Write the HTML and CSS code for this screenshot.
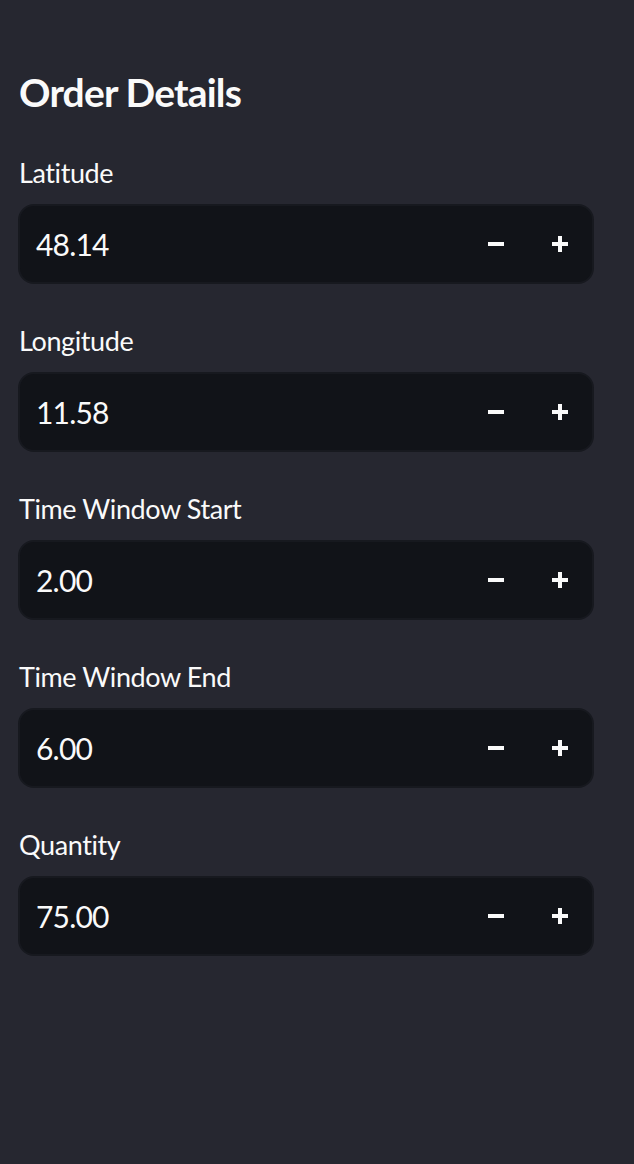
FILE: index.html
```html
<!DOCTYPE html>
<html>
<head>
<meta charset="utf-8">
<link rel="stylesheet" href="styles.css">
</head>
<body>
<div class="sidebar">
  <h2 class="title">Order Details</h2>
  <div class="field">
    <label class="label">Latitude</label>
    <div class="input">
      <span class="value">48.14</span>
      <div class="steps">
        <button class="step"><svg width="16" height="16" viewBox="0 0 16 16"><rect x="0" y="6" width="16" height="4" fill="#fafafa"/></svg></button>
        <button class="step"><svg width="16" height="16" viewBox="0 0 16 16"><rect x="0" y="6" width="16" height="4" fill="#fafafa"/><rect x="6" y="0" width="4" height="16" fill="#fafafa"/></svg></button>
      </div>
    </div>
  </div>
  <div class="field">
    <label class="label">Longitude</label>
    <div class="input">
      <span class="value">11.58</span>
      <div class="steps">
        <button class="step"><svg width="16" height="16" viewBox="0 0 16 16"><rect x="0" y="6" width="16" height="4" fill="#fafafa"/></svg></button>
        <button class="step"><svg width="16" height="16" viewBox="0 0 16 16"><rect x="0" y="6" width="16" height="4" fill="#fafafa"/><rect x="6" y="0" width="4" height="16" fill="#fafafa"/></svg></button>
      </div>
    </div>
  </div>
  <div class="field">
    <label class="label">Time Window Start</label>
    <div class="input">
      <span class="value">2.00</span>
      <div class="steps">
        <button class="step"><svg width="16" height="16" viewBox="0 0 16 16"><rect x="0" y="6" width="16" height="4" fill="#fafafa"/></svg></button>
        <button class="step"><svg width="16" height="16" viewBox="0 0 16 16"><rect x="0" y="6" width="16" height="4" fill="#fafafa"/><rect x="6" y="0" width="4" height="16" fill="#fafafa"/></svg></button>
      </div>
    </div>
  </div>
  <div class="field">
    <label class="label">Time Window End</label>
    <div class="input">
      <span class="value">6.00</span>
      <div class="steps">
        <button class="step"><svg width="16" height="16" viewBox="0 0 16 16"><rect x="0" y="6" width="16" height="4" fill="#fafafa"/></svg></button>
        <button class="step"><svg width="16" height="16" viewBox="0 0 16 16"><rect x="0" y="6" width="16" height="4" fill="#fafafa"/><rect x="6" y="0" width="4" height="16" fill="#fafafa"/></svg></button>
      </div>
    </div>
  </div>
  <div class="field">
    <label class="label">Quantity</label>
    <div class="input">
      <span class="value">75.00</span>
      <div class="steps">
        <button class="step"><svg width="16" height="16" viewBox="0 0 16 16"><rect x="0" y="6" width="16" height="4" fill="#fafafa"/></svg></button>
        <button class="step"><svg width="16" height="16" viewBox="0 0 16 16"><rect x="0" y="6" width="16" height="4" fill="#fafafa"/><rect x="6" y="0" width="4" height="16" fill="#fafafa"/></svg></button>
      </div>
    </div>
  </div>
</div>
</body>
</html>
```

FILE: styles.css
```css
html, body {
  margin: 0;
  padding: 0;
  background: #262730;
  height: 100%;
}
body {
  font-family: "Lato", "Noto Sans", sans-serif;
  color: #fafafa;
  font-variant-ligatures: none;
}
.sidebar {
  display: flex;
  flex-direction: column;
  gap: 39px;
  padding: 68px 40px 0 18px;
}
.title {
  margin: 0;
  font-size: 39px;
  font-weight: 700;
  line-height: 48px;
  letter-spacing: -0.8px;
  padding-left: 1px;
}
.field {
  display: flex;
  flex-direction: column;
  gap: 13px;
}
.label {
  font-size: 27px;
  line-height: 36px;
  letter-spacing: -0.4px;
  padding-left: 1px;
}
.input {
  box-sizing: border-box;
  height: 80px;
  background: #111318;
  border: 2px solid #17191f;
  border-radius: 16px;
  display: flex;
  align-items: center;
  padding-left: 16px;
}
.value {
  flex: 1;
  font-size: 30px;
  letter-spacing: -0.8px;
}
.steps {
  display: flex;
  height: 100%;
}
.step {
  width: 64px;
  height: 100%;
  background: transparent;
  border: 0;
  padding: 0;
  display: flex;
  align-items: center;
  justify-content: center;
}
.step svg {
  display: block;
}
```
